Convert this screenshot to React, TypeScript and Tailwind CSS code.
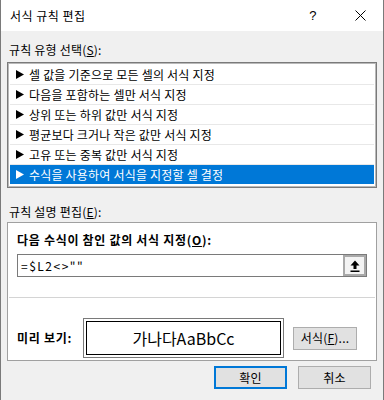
const ko = { fontFamily: '"Noto Sans CJK KR", "Noto Sans", sans-serif' };

const ruleTypes = [
  '셀 값을 기준으로 모든 셀의 서식 지정',
  '다음을 포함하는 셀만 서식 지정',
  '상위 또는 하위 값만 서식 지정',
  '평균보다 크거나 작은 값만 서식 지정',
  '고유 또는 중복 값만 서식 지정',
  '수식을 사용하여 서식을 지정할 셀 결정',
];

function Arrow({ color }: { color: string }) {
  return (
    <svg width="8" height="9" viewBox="0 0 8 9" className="shrink-0">
      <polygon points="0,0 8,4.5 0,9" fill={color} />
    </svg>
  );
}

export default function App() {
  const selected = 5;

  return (
    <div className="w-[384px] h-[400px] bg-[#f0f0f0] border-l border-r border-[#7a7a7a] text-[12px] text-black tracking-[0.2px]" style={ko}>
      {/* Title bar */}
      <div className="h-[31px] bg-white flex items-center pl-[9px]">
        <div className="flex-1 text-[12px] leading-none tracking-[0.5px]">서식 규칙 편집</div>
        <div className="w-[46px] flex justify-center text-[13px] mr-[1px]" style={{ fontFamily: '"Liberation Sans", sans-serif' }}>?</div>
        <div className="w-[46px] h-[31px] flex items-center justify-center">
          <svg width="11" height="11" viewBox="0 0 11 11">
            <path d="M0.5 0.5 L10.5 10.5 M10.5 0.5 L0.5 10.5" stroke="#000" strokeWidth="1" />
          </svg>
        </div>
      </div>

      <div className="px-[6px]">
        <div className="mt-[11px] leading-[16px] pl-[2px]">
          규칙 유형 선택(<u>S</u>):
        </div>

        {/* Rule type list */}
        <div className="mt-[4px] h-[126px] border border-[#7a7a7a]">
          <div className="h-full border border-[#b9b9b9] bg-white p-[1px]">
            {ruleTypes.map((t, i) => (
              <div
                key={i}
                className={
                  i === selected
                    ? 'h-[19px] flex items-center gap-[5px] pl-[6px] bg-[#0078d7] text-white'
                    : 'h-[20px] flex items-center gap-[5px] pl-[6px] border-b border-[#e8e8e8]'
                }
              >
                <Arrow color={i === selected ? '#fff' : '#000'} />
                <span className="leading-none">{t}</span>
              </div>
            ))}
          </div>
        </div>

        <div className="mt-[16px] leading-[16px] pl-[2px]">
          규칙 설명 편집(<u>E</u>):
        </div>

        {/* Description group */}
        <div className="mt-[2px] h-[139px] border border-[#a0a0a0] bg-white pt-[9px] px-[9px]">
          <div className="font-bold leading-[16px] tracking-[0.7px]">
            다음 수식이 참인 값의 서식 지정(<u>O</u>):
          </div>
          <div className="mt-[6px] h-[23px] w-[350px] border border-[#7a7a7a] flex">
            <div className="flex-1 flex items-center pl-[3px] tracking-[1.5px]">=$L2&lt;&gt;&quot;&quot;</div>
            <div className="w-[23px] h-full border-2 border-[#a9a9a9] bg-[#f3f3f3] flex items-center justify-center">
              <svg width="10" height="12" viewBox="0 0 10 12">
                <path d="M5 0.5 L9.5 5.5 L6.5 5.5 L6.5 9 L3.5 9 L3.5 5.5 L0.5 5.5 Z" fill="#000" />
                <rect x="0.5" y="10.5" width="9" height="1.5" fill="#000" />
              </svg>
            </div>
          </div>

          <div className="mt-[20px] -mx-[8px] border-t border-[#d4d4d4]" />

          <div className="mt-[20px] flex items-center">
            <div className="w-[66px] font-bold tracking-[0.7px]">미리 보기:</div>
            <div className="w-[201px] h-[40px] border border-[#7a7a7a] p-[2px]">
              <div className="h-full border border-black flex items-center justify-center text-[16px] tracking-normal">
                가나다AaBbCc
              </div>
            </div>
            <div className="ml-[9px] w-[64px] h-[23px] border border-[#adadad] bg-[#e1e1e1] flex items-center justify-center">
              서식(<u>F</u>)...
            </div>
          </div>
        </div>

        {/* Footer buttons */}
        <div className="mt-[5px] flex justify-end gap-[11px] pr-[6px]">
          <div className="w-[73px] h-[23px] border-2 border-[#0078d7] bg-[#e1e1e1] flex items-center justify-center">
            확인
          </div>
          <div className="w-[73px] h-[23px] border border-[#adadad] bg-[#e1e1e1] flex items-center justify-center">
            취소
          </div>
        </div>
      </div>
    </div>
  );
}
